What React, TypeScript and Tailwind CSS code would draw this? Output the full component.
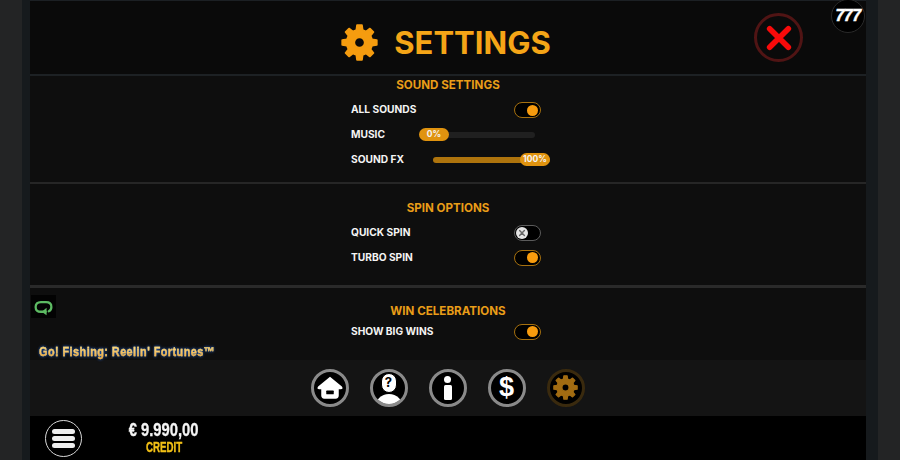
const gearPath = (() => {
  const teeth = 8, cx = 50, cy = 50, rO = 50, rI = 37, hole = 15;
  let d = "";
  for (let i = 0; i < teeth; i++) {
    const a = (i / teeth) * Math.PI * 2 - Math.PI / 2;
    const s = Math.PI / teeth;
    const pts = [[rI, -s * 0.62], [rO, -s * 0.36], [rO, s * 0.36], [rI, s * 0.62]];
    pts.forEach(([r, o], j) => {
      const x = (cx + r * Math.cos(a + o)).toFixed(2);
      const y = (cy + r * Math.sin(a + o)).toFixed(2);
      d += `${i === 0 && j === 0 ? "M" : "L"}${x} ${y} `;
    });
  }
  d += `Z M${cx + hole} ${cy} A${hole} ${hole} 0 1 0 ${cx - hole} ${cy} A${hole} ${hole} 0 1 0 ${cx + hole} ${cy} Z`;
  return d;
})();

function Gear({ className, color }: { className: string; color: string }) {
  return (
    <svg viewBox="-3 -3 106 106" className={className}>
      <path d={gearPath} fill={color} stroke={color} strokeWidth="5" strokeLinejoin="round" fillRule="evenodd" />
    </svg>
  );
}

function Toggle({ on }: { on: boolean }) {
  if (on) {
    return (
      <div className="flex h-[16px] w-[27px] items-center justify-end rounded-full border-[1.5px] border-[#a5700f] bg-black pr-[2px]">
        <div className="h-[11px] w-[11px] rounded-full bg-[#f89c0e]" />
      </div>
    );
  }
  return (
    <div className="flex h-[16px] w-[27px] items-center justify-start rounded-full border-[1.5px] border-[#5b5b5b] bg-black pl-[1px]">
      <div className="flex h-[12px] w-[12px] items-center justify-center rounded-full bg-[#e4e4e4]">
        <svg viewBox="0 0 10 10" className="h-[8px] w-[8px]">
          <path d="M2 2L8 8M8 2L2 8" stroke="#666" strokeWidth="1.8" strokeLinecap="round" />
        </svg>
      </div>
    </div>
  );
}

function Row({ label, children }: { label: string; children: React.ReactNode }) {
  return (
    <div className="flex h-[25px] items-center justify-between">
      <span className="text-[10.2px] font-bold text-[#f4f4f4]">{label}</span>
      {children}
    </div>
  );
}

function SectionTitle({ children }: { children: React.ReactNode }) {
  return <div className="text-center text-[11.6px] font-bold leading-[16px] text-[#e99d18]">{children}</div>;
}

function Thumb({ children }: { children: React.ReactNode }) {
  return (
    <div className="flex h-[13px] w-[30px] items-center justify-center rounded-full bg-[#e0930f] text-[8.5px] font-bold text-[#f4f4f4]">
      {children}
    </div>
  );
}

function RoundIcon({ children }: { children: React.ReactNode }) {
  return (
    <div className="flex h-[38px] w-[38px] items-center justify-center rounded-full border-[3px] border-[#8a8a8a] bg-black">
      {children}
    </div>
  );
}

export default function App() {
  return (
    <div className="relative flex h-[460px] w-[900px] overflow-hidden bg-[#232425] font-['Inter','Liberation_Sans',sans-serif]">
      <div className="ml-[22px] flex h-full w-[856px] bg-[#161a1d] pl-[8px] pr-[12px]">
        <div className="flex h-full w-[836px] flex-col bg-[#0e0e0e]">
          {/* Header */}
          <div className="relative flex h-[76px] shrink-0 items-center justify-center gap-[16px] border-t border-b-2 border-t-[#1c2024] border-b-[#1d2124] bg-[#0a0a0a] pt-[10px] pr-[4px]">
            <Gear className="h-[37px] w-[37px]" color="#f59c0f" />
            <span className="text-[31px] font-bold leading-none text-[#f5a517]">SETTINGS</span>
            <div className="absolute left-[724px] top-[12px] flex h-[49px] w-[49px] items-center justify-center rounded-full border-[3px] border-[#501414]">
              <svg viewBox="0 0 30 30" className="h-[28px] w-[28px]">
                <path d="M5 5L25 25M25 5L5 25" stroke="#f80a0a" strokeWidth="6" strokeLinecap="round" />
              </svg>
            </div>
          </div>

          {/* Sound */}
          <div className="h-[108px] shrink-0 border-b-2 border-b-[#262626] pt-px">
            <SectionTitle>SOUND SETTINGS</SectionTitle>
            <div className="ml-[321px] mt-[5px] w-[200px]">
              <div className="flex h-[24px] items-center justify-between pr-[10px]">
                <span className="text-[10.2px] font-bold text-[#f4f4f4]">ALL SOUNDS</span>
                <Toggle on />
              </div>
              <Row label="MUSIC">
                <div className="relative mr-[16px] flex h-[6px] w-[116px] items-center rounded-full bg-[#202020]">
                  <div className="absolute left-0"><Thumb>0%</Thumb></div>
                </div>
              </Row>
              <Row label="SOUND FX">
                <div className="relative mr-px flex h-[6px] w-[117px] items-center justify-end rounded-full bg-[#ae740d]">
                  <div className="absolute right-0"><Thumb>100%</Thumb></div>
                </div>
              </Row>
            </div>
          </div>

          {/* Spin */}
          <div className="h-[104px] shrink-0 border-b-[3px] border-b-[#2a2a2a] pt-[16px]">
            <SectionTitle>SPIN OPTIONS</SectionTitle>
            <div className="ml-[321px] mt-[4px] w-[200px] pr-[10px]">
              <Row label="QUICK SPIN"><Toggle on={false} /></Row>
              <Row label="TURBO SPIN"><Toggle on /></Row>
            </div>
          </div>

          {/* Win */}
          <div className="h-[72px] shrink-0 pt-[15px]">
            <SectionTitle>WIN CELEBRATIONS</SectionTitle>
            <div className="ml-[321px] w-[200px] pr-[10px]">
              <Row label="SHOW BIG WINS"><Toggle on /></Row>
            </div>
          </div>

          {/* Icon bar */}
          <div className="flex h-[56px] shrink-0 items-center justify-center gap-[21px] bg-[#141414] pb-[1px] pr-[1px]">
            <RoundIcon>
              <svg viewBox="0 0 24 24" className="h-[30px] w-[30px]">
                <path d="M12 3L21.5 10.8Q23 13 20.5 13H19V18Q19 20.5 16.5 20.5H7.5Q5 20.5 5 18V13H3.5Q1 13 2.5 10.8Z" fill="#fff" />
                <rect x="9" y="14" width="6" height="3" rx="0.5" fill="#000" />
              </svg>
            </RoundIcon>
            <RoundIcon>
              <div className="relative flex h-full w-full items-start justify-center overflow-hidden rounded-full">
                <div className="absolute bottom-[-8px] h-[18px] w-[28px] rounded-t-full bg-white" />
                <div className="relative mt-[1px] flex h-[20px] w-[16px] items-center justify-center rounded-full border-[1.5px] border-black bg-white text-[13px] font-bold leading-none text-black">?</div>
              </div>
            </RoundIcon>
            <RoundIcon>
              <div className="flex flex-col items-center gap-[2px]">
                <div className="h-[7px] w-[7px] rounded-full bg-white" />
                <div className="h-[15px] w-[8px] rounded-[1.5px] bg-white" />
              </div>
            </RoundIcon>
            <RoundIcon>
              <span className="font-['Liberation_Sans',sans-serif] text-[27px] font-bold leading-none text-white">$</span>
            </RoundIcon>
            <div className="flex h-[38px] w-[38px] items-center justify-center rounded-full border-[3px] border-[#3a2a0e] bg-black">
              <Gear className="h-[25px] w-[25px]" color="#a26c12" />
            </div>
          </div>

          {/* Bottom bar */}
          <div className="flex min-h-0 flex-1 items-center bg-black pl-[15px]">
            <div className="flex h-[37px] w-[37px] flex-col items-center justify-center gap-[2px] rounded-full border-[1.5px] border-[#d8d8d8]">
              <div className="h-[5px] w-[23px] rounded-full bg-[#eeeeee]" />
              <div className="h-[5px] w-[23px] rounded-full bg-[#eeeeee]" />
              <div className="h-[5px] w-[23px] rounded-full bg-[#eeeeee]" />
            </div>
            <div className="ml-[43px] flex w-[78px] flex-col items-center whitespace-nowrap pb-[2px] font-['Liberation_Sans',sans-serif] font-bold">
              <span className="scale-x-[0.82] text-[18px] leading-[20px] text-[#f4f4f4] [-webkit-text-stroke:0.3px_#f4f4f4]">€ 9.990,00</span>
              <span className="scale-x-[0.67] text-[14.5px] leading-[15px] text-[#f2c016] [-webkit-text-stroke:0.4px_#f2c016]">CREDIT</span>
            </div>
          </div>
        </div>
      </div>

      {/* Overlays */}
      <div className="absolute left-[31px] top-[295px] flex h-[23px] w-[25px] items-center justify-center bg-[#030303]">
        <svg viewBox="0 0 24 24" className="h-[21px] w-[21px]">
          <path d="M14.5 18H9Q3 18 3 12.5Q3 7 9 7H15Q21 7 21 12.5Q21 16 18 17.5" fill="none" stroke="#5dbb63" strokeWidth="2.6" strokeLinecap="round" />
          <path d="M15.5 13.5V22L10 18Z" fill="#5dbb63" />
        </svg>
      </div>
      <div className="absolute left-[39px] top-[344px] origin-left scale-x-[0.865] whitespace-nowrap bg-gradient-to-b from-[#fff0a0] to-[#e8961e] bg-clip-text font-['Liberation_Sans',sans-serif] text-[12.5px] font-bold leading-[16px] tracking-[0.55px] text-transparent [-webkit-text-stroke:0.3px_#f2c45c] [filter:drop-shadow(0_0_1.5px_#1d5fd0)]">
        Go! Fishing: Reelin' Fortunes™
      </div>
      <div className="absolute left-[831px] top-[-1px] flex h-[34px] w-[34px] items-center justify-center rounded-full border border-[#2a2a2a] bg-black">
        <span className="font-['Liberation_Sans',sans-serif] text-[16px] font-bold italic leading-none tracking-[-0.5px] text-white [-webkit-text-stroke:0.5px_#ffffff]">777</span>
      </div>
    </div>
  );
}
